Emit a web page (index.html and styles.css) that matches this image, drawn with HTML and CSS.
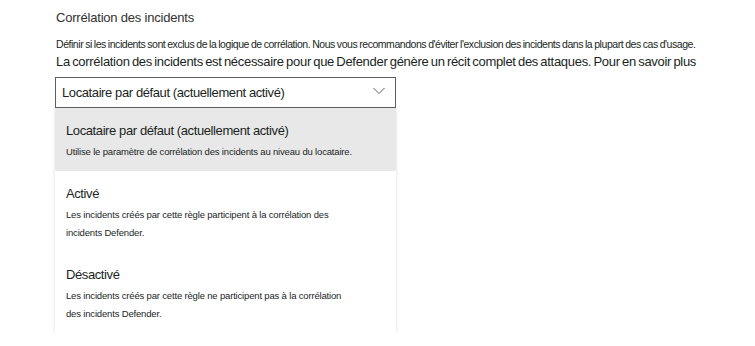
FILE: index.html
```html
<!DOCTYPE html>
<html lang="fr">
<head>
<meta charset="utf-8">
<link rel="stylesheet" href="styles.css">
</head>
<body>
<div class="panel">
  <div class="title">Corrélation des incidents</div>
  <div class="desc">Définir si les incidents sont exclus de la logique de corrélation. Nous vous recommandons d'éviter l'exclusion des incidents dans la plupart des cas d'usage.</div>
  <div class="info">La corrélation des incidents est nécessaire pour que Defender génère un récit complet des attaques. Pour en savoir plus</div>
  <div class="dropdown">
    <div class="select">
      <span class="value">Locataire par défaut (actuellement activé)</span>
      <svg class="chevron" width="12" height="8" viewBox="0 0 12 8"><path d="M0.5 1 L6 6.5 L11.5 1" fill="none" stroke="#605e5c" stroke-width="1"/></svg>
    </div>
    <div class="menu">
      <div class="option selected">
        <div class="opt-title">Locataire par défaut (actuellement activé)</div>
        <div class="opt-desc">Utilise le paramètre de corrélation des incidents au niveau du locataire.</div>
      </div>
      <div class="option">
        <div class="opt-title">Activé</div>
        <div class="opt-desc">Les incidents créés par cette règle participent à la corrélation des incidents Defender.</div>
      </div>
      <div class="option">
        <div class="opt-title">Désactivé</div>
        <div class="opt-desc">Les incidents créés par cette règle ne participent pas à la corrélation des incidents Defender.</div>
      </div>
    </div>
  </div>
</div>
</body>
</html>
```
FILE: styles.css
```css
body {
  margin: 0;
  background: #ffffff;
  font-family: "Liberation Sans", Arial, sans-serif;
  color: #201f1e;
}
.panel {
  padding: 8px 0 0 55px;
}
.title {
  font-size: 13px;
  line-height: 20px;
  color: #323130;
  padding-left: 1px;
  letter-spacing: -0.2px;
}
.desc {
  margin-top: 7px;
  font-size: 10.5px;
  line-height: 18px;
  letter-spacing: -0.45px;
  word-spacing: -0.5px;
  padding-left: 1px;
  white-space: nowrap;
}
.info {
  font-size: 13px;
  line-height: 18px;
  letter-spacing: -0.3px;
  word-spacing: -1px;
  padding-left: 1px;
  white-space: nowrap;
}
.dropdown {
  margin-top: 6px;
  width: 341px;
}
.select {
  height: 29px;
  border: 1px solid #605e5c;
  display: flex;
  align-items: center;
  justify-content: space-between;
  padding: 0 10px 0 6px;
  font-size: 13px;
  letter-spacing: -0.4px;
}
.chevron {
  margin-top: -4px;
}
.menu {
  box-shadow: 0 1.6px 3.6px rgba(0,0,0,0.13), 0 0.3px 0.9px rgba(0,0,0,0.11);
  background: #fff;
}
.option {
  padding: 13px 12px 10px 11px;
}
.option.selected {
  background: #e8e8e8;
}
.opt-title {
  font-size: 13px;
  line-height: 20px;
  letter-spacing: -0.4px;
  color: #201f1e;
}
.opt-desc {
  margin-top: 2px;
  font-size: 9.5px;
  line-height: 18px;
  letter-spacing: -0.17px;
  max-width: 291px;
  color: #201f1e;
}
```
